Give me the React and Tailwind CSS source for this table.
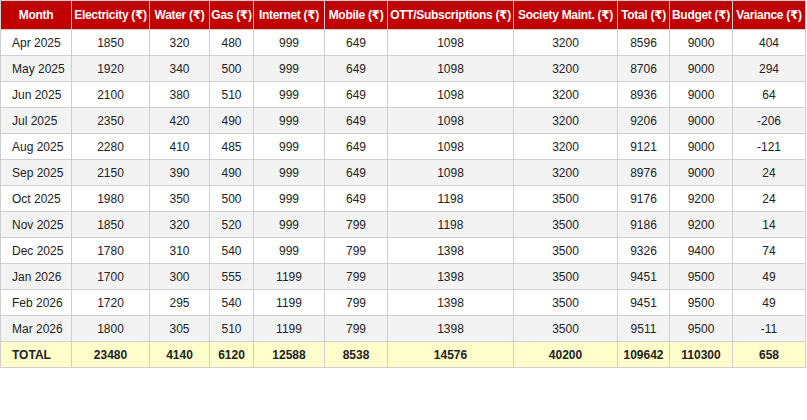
import React from "react";

const headers = ["Month","Electricity (₹)","Water (₹)","Gas (₹)","Internet (₹)","Mobile (₹)","OTT/Subscriptions (₹)","Society Maint. (₹)","Total (₹)","Budget (₹)","Variance (₹)"];
const widths = [71,78,60,44,71,63,126,104,52,63,73];
const rows = [
  ["Apr 2025",1850,320,480,999,649,1098,3200,8596,9000,404],
  ["May 2025",1920,340,500,999,649,1098,3200,8706,9000,294],
  ["Jun 2025",2100,380,510,999,649,1098,3200,8936,9000,64],
  ["Jul 2025",2350,420,490,999,649,1098,3200,9206,9000,-206],
  ["Aug 2025",2280,410,485,999,649,1098,3200,9121,9000,-121],
  ["Sep 2025",2150,390,490,999,649,1098,3200,8976,9000,24],
  ["Oct 2025",1980,350,500,999,649,1198,3500,9176,9200,24],
  ["Nov 2025",1850,320,520,999,799,1198,3500,9186,9200,14],
  ["Dec 2025",1780,310,540,999,799,1398,3500,9326,9400,74],
  ["Jan 2026",1700,300,555,1199,799,1398,3500,9451,9500,49],
  ["Feb 2026",1720,295,540,1199,799,1398,3500,9451,9500,49],
  ["Mar 2026",1800,305,510,1199,799,1398,3500,9511,9500,-11],
];
const total = ["TOTAL",23480,4140,6120,12588,8538,14576,40200,109642,110300,658];

export default function App() {
  return (
    <div className="bg-white w-[807px] h-[420px]" style={{fontFamily: '"Liberation Sans", "DejaVu Sans", sans-serif'}}>
      <table className="table-fixed border-collapse w-[806px] text-[12px] text-[#222]">
        <colgroup>
          {widths.map((w, i) => <col key={i} style={{ width: w }} />)}
        </colgroup>
        <thead>
          <tr className="h-[29px] bg-[#c00000] text-white">
            {headers.map((h) => (
              <th key={h} className="border border-[#cfcfcf] font-bold text-center whitespace-nowrap p-0 tracking-[-0.3px] overflow-visible">{h}</th>
            ))}
          </tr>
        </thead>
        <tbody>
          {rows.map((r, i) => (
            <tr key={i} className={`h-[26px] ${i % 2 === 1 ? "bg-[#f3f3f3]" : "bg-white"}`}>
              {r.map((c, j) => (
                <td key={j} className={`border border-[#cfcfcf] whitespace-nowrap p-0 ${j === 0 ? "text-left pl-[11px]" : "text-center"}`}>{c}</td>
              ))}
            </tr>
          ))}
          <tr className="h-[26px] bg-[#ffffcc] font-bold">
            {total.map((c, j) => (
              <td key={j} className={`border border-[#cfcfcf] whitespace-nowrap p-0 ${j === 0 ? "text-left pl-[11px]" : "text-center"}`}>{c}</td>
            ))}
          </tr>
        </tbody>
      </table>
    </div>
  );
}
